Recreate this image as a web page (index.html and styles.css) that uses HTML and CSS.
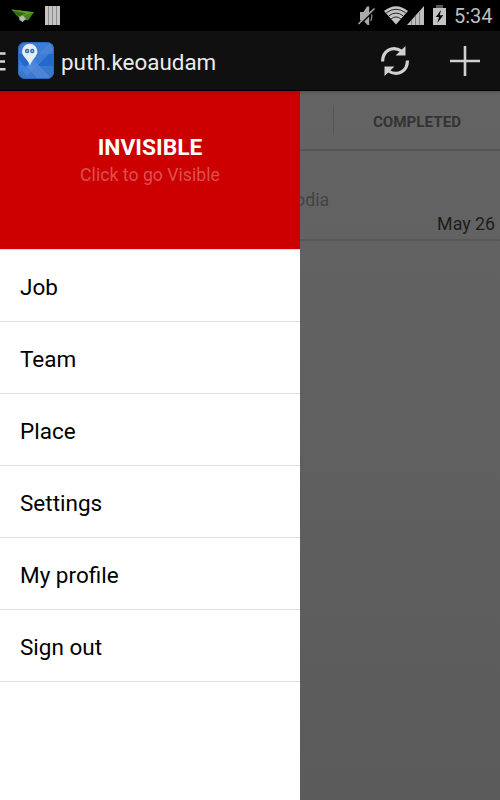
FILE: index.html
```html
<!DOCTYPE html>
<html lang="en">
  <head>
    <meta charset="UTF-8" />
    <meta name="viewport" content="width=device-width, initial-scale=1.0" />
    <title>puth.keoaudam</title>
    <link rel="stylesheet" href="styles.css">
  </head>
  <body>
    <div class="status-bar">
      <svg class="plane" width="24" height="16" viewBox="0 0 24 16">
        <path d="M0.5 1.5 L23 4.2 L17 12.5 L7 9 Z" fill="#43851a" />
        <path d="M0.5 1.5 L23 4.2 L10 8.5 Z" fill="#5c9e2c" />
        <path d="M2 2.5 L15 5.2 L8 8.5 Z" fill="#356b13" />
        <path d="M8 9 L12 7.5 L15 11 L11.5 14 L8.5 12 Z" fill="#b8bbb5" />
      </svg>
      <svg class="bars" width="15" height="19" viewBox="0 0 15 19">
        <rect width="15" height="19" fill="#8b8b8b" />
        <path d="M0 0h3v19H0z M4 0h3v19H4z M8 0h3v19H8z M12 0h3v19h-3z" fill="#c4c4c4" />
      </svg>
      <div class="system">
        <svg class="muted" width="18" height="20" viewBox="0 0 18 20">
          <path d="M2 6h3.5L9 0.5h2.2v18.5H9.5L5.5 14.5H2z" fill="#aaa" />
          <path d="M12.8 5q2 5 0 10" fill="none" stroke="#888" stroke-width="1.3" />
          <path d="M1.5 18.8 L17 4" stroke="#000" stroke-width="1.6" />
          <path d="M0.5 18 L16.5 2.5" stroke="#aaa" stroke-width="1.5" />
        </svg>
        <svg class="wifi" width="24" height="19" viewBox="0 0 24 19">
          <path d="M0 5 Q12 -4.5 24 5 L12 18.5 Z" fill="#c4c4c4" />
          <path d="M2.3 6.8 Q12 -0.3 21.7 6.8 M4.8 9.8 Q12 4.3 19.2 9.8 M7.3 12.7 Q12 9.2 16.7 12.7" fill="none" stroke="#222" stroke-width="1" />
        </svg>
        <svg class="signal" width="17" height="19" viewBox="0 0 17 19">
          <path d="M17 0V19H0z" fill="#bdbdbd" />
          <path d="M4.5 14v5 M8.5 10v9 M12.5 6v13" stroke="#808080" stroke-width="1" />
        </svg>
        <svg class="battery" width="13" height="20" viewBox="0 0 13 20">
          <path d="M3 0h7v3H3z" fill="#555" />
          <path d="M0 3h13v17H0z" fill="#c4c4c4" />
          <path d="M8 5 L2.8 12 H6 L4.3 18 L10.3 10.2 H6.7 Z" fill="#000" />
        </svg>
        <span class="clock">5:34</span>
      </div>
    </div>

    <div class="action-bar">
      <svg class="menu-icon" width="6" height="20" viewBox="0 0 6 20">
        <path d="M0 1.5h5.5 M0 9.5h5 M0 17.3h5.5" stroke="#d6d6d6" stroke-width="2.6" />
      </svg>
      <svg class="app-icon" width="36" height="37" viewBox="0 0 36 37">
        <defs>
          <clipPath id="tile"><rect x="0.5" y="0.5" width="35" height="36" rx="6" /></clipPath>
        </defs>
        <g clip-path="url(#tile)">
          <rect width="36" height="37" fill="#3b7bd4" />
          <path d="M0 12h36v12H0z" fill="#2269ca" />
          <path d="M20 0h16v12H20z" fill="#3c7cd4" />
          <path d="M0 24h36v13H0z" fill="#3978d1" />
          <path d="M33 0h3v7L9 34l-5-6z" fill="#5189dc" opacity=".6" />
          <path d="M9 25l6-8 19 20H20z" fill="#588ee0" opacity=".6" />
          <path d="M0 16l7 9-7 7z" fill="#4c85da" opacity=".6" />
          <path d="M12 24C11 18 4 15 4 9.5a7.7 7.7 0 0 1 15.4 0C19.4 15 13 18 12 24z" fill="#e4edf8" />
          <circle cx="9.1" cy="9" r="1.6" fill="#9dbbe8" stroke="#2868bf" stroke-width="1.2" />
          <circle cx="14.3" cy="9" r="1.6" fill="#9dbbe8" stroke="#2868bf" stroke-width="1.2" />
        </g>
        <rect x="0.5" y="0.5" width="35" height="36" rx="6" fill="none" stroke="#2c68bd" />
      </svg>
      <h1 class="title">puth.keoaudam</h1>
      <svg class="refresh" width="28" height="30" viewBox="0 0 28 30">
        <g fill="none" stroke="#d0d0d0" stroke-width="3.2">
          <path d="M1.6 15.5 C1.5 5 11 -1 20.5 5" />
          <path d="M26.4 14.5 C26.5 25 17 31 7.5 25" />
        </g>
        <path d="M24.5 0v9.5H14.5z M3.5 30v-9.5H13.5z" fill="#d0d0d0" />
      </svg>
      <svg class="add" width="30" height="30" viewBox="0 0 30 30">
        <path d="M15 0v30 M0 15h30" stroke="#d0d0d0" stroke-width="2.6" />
      </svg>
    </div>

    <div class="main">
      <div class="drawer">
        <div class="visibility">
          <div class="state">INVISIBLE</div>
          <div class="hint">Click to go Visible</div>
        </div>
        <ul class="menu">
          <li>Job</li>
          <li>Team</li>
          <li>Place</li>
          <li>Settings</li>
          <li>My profile</li>
          <li>Sign out</li>
        </ul>
      </div>
      <div class="content">
        <div class="tabs">
          <div class="tab">COMPLETED</div>
        </div>
        <div class="job">
          <div class="location">odia</div>
          <div class="date">May 26</div>
        </div>
      </div>
    </div>
  </body>
</html>
```

FILE: styles.css
```css
* {
  box-sizing: border-box;
}

body {
  font-family: Roboto, sans-serif;
  background-color: #000;
  margin: 0;
  height: 100vh;
  display: flex;
  flex-direction: column;
  overflow: hidden;
}

svg {
  display: block;
  flex: none;
}

.status-bar {
  height: 31px;
  flex: none;
  display: flex;
  align-items: flex-start;
  padding: 6px 7px 0 11px;
}

.plane {
  margin-top: 2px;
}

.bars {
  margin-left: 10px;
}

.system {
  margin-left: auto;
  display: flex;
  align-items: flex-start;
}

.wifi {
  margin-left: 8px;
}

.signal {
  margin-left: -1px;
}

.battery {
  margin-left: 9px;
  margin-top: -1px;
}

.clock {
  width: 39px;
  margin-left: 8px;
  color: #bebebe;
  font-size: 20px;
  line-height: 21px;
  white-space: nowrap;
}

.action-bar {
  height: 60px;
  flex: none;
  display: flex;
  align-items: center;
  padding-right: 20px;
  background-color: #101010;
  border-bottom: 1px solid #000;
}

.menu-icon {
  margin-top: 3px;
}

.app-icon {
  margin-left: 12px;
}

.title {
  margin: 3px 0 0 7px;
  color: #ececec;
  font-size: 22.4px;
  font-weight: normal;
  line-height: 28px;
}

.refresh {
  margin-left: auto;
}

.add {
  margin-left: 41px;
}

.main {
  flex: 1;
  display: flex;
}

.drawer {
  width: 300px;
  flex: none;
  background-color: #fff;
}

.visibility {
  height: 158px;
  padding-top: 43px;
  background: linear-gradient(#b80000, #cc0000 4px);
  text-align: center;
}

.state {
  color: #fff;
  font-size: 22.8px;
  font-weight: bold;
  line-height: 28px;
}

.hint {
  color: #dc5050;
  font-size: 17.7px;
  line-height: 26px;
}

.menu {
  margin: 0;
  padding: 0;
  list-style: none;
  border-top: 1px solid #e0e0e0;
}

.menu li {
  height: 72px;
  padding: 2px 20px 0;
  border-bottom: 1px solid #dfdfdf;
  color: #000;
  font-size: 22.5px;
  line-height: 71px;
}

.content {
  flex: 1;
  overflow: hidden;
  background: linear-gradient(#555, #646464 4px, #5b5b5b);
}

.tabs {
  height: 60px;
  display: flex;
  align-items: center;
  padding-left: 33px;
  border-bottom: 2px solid #555;
}

.tab {
  flex: 1;
  height: 30px;
  padding-top: 2px;
  border-left: 1px solid #565656;
  color: #333;
  font-size: 15.2px;
  font-weight: bold;
  line-height: 31px;
  text-align: center;
}

.job {
  height: 90px;
  padding: 36px 5px 0 0;
  border-bottom: 2px solid #585858;
}

.location {
  margin-left: -5px;
  color: #434343;
  font-size: 17.8px;
  line-height: 25px;
}

.date {
  color: #1c1c1c;
  font-size: 17.8px;
  line-height: 23px;
  text-align: right;
}
```
